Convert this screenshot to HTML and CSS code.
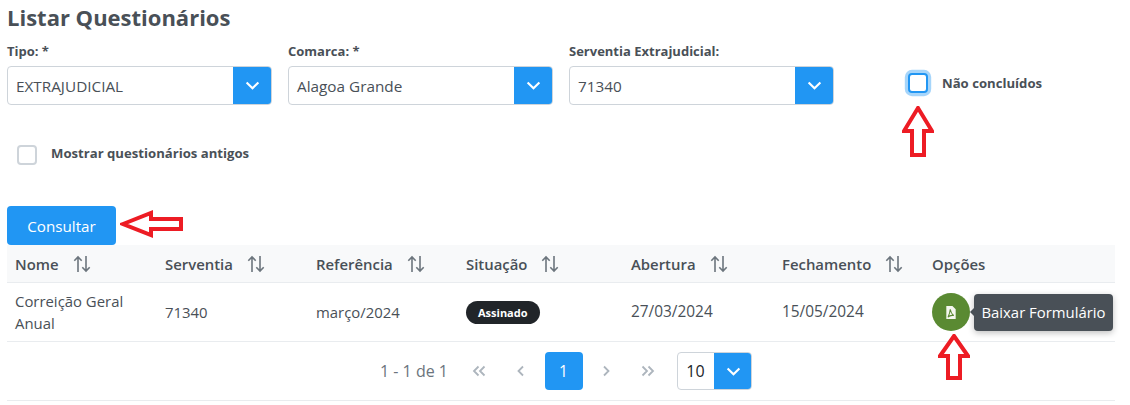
FILE: index.html
```html
<!DOCTYPE html>
<html lang="pt-BR">
<head>
<meta charset="utf-8">
<title>Listar Questionários</title>
<link rel="stylesheet" href="styles.css">
</head>
<body>
<main class="page">
  <h1 class="title">Listar Questionários</h1>
  <div class="filters">
    <div class="field">
      <label class="field-label">Tipo: *</label>
      <div class="select"><span class="select-value">EXTRAJUDICIAL</span><span class="select-btn"><svg class="chev" viewBox="0 0 14 8"><path d="M1.5 1.2 7 6.5l5.5-5.3"/></svg></span></div>
    </div>
    <div class="field">
      <label class="field-label">Comarca: *</label>
      <div class="select"><span class="select-value">Alagoa Grande</span><span class="select-btn"><svg class="chev" viewBox="0 0 14 8"><path d="M1.5 1.2 7 6.5l5.5-5.3"/></svg></span></div>
    </div>
    <div class="field">
      <label class="field-label">Serventia Extrajudicial:</label>
      <div class="select"><span class="select-value">71340</span><span class="select-btn"><svg class="chev" viewBox="0 0 14 8"><path d="M1.5 1.2 7 6.5l5.5-5.3"/></svg></span></div>
    </div>
    <div class="check check-focus">
      <span class="box box-focus"></span>
      <span class="check-label">Não concluídos</span>
    </div>
  </div>
  <div class="check check-old">
    <span class="box"></span>
    <span class="check-label">Mostrar questionários antigos</span>
  </div>
  <button class="primary" type="button">Consultar</button>

  <section class="table">
    <div class="row head">
      <div class="cell">Nome<svg class="sort" viewBox="0 0 18 18"><path d="M5 17V2M1.3 5.700 5 2l3.700 3.700M13 1v15M9.300 12.300 13 16l3.700-3.700"/></svg></div>
      <div class="cell">Serventia<svg class="sort" viewBox="0 0 18 18"><path d="M5 17V2M1.3 5.700 5 2l3.700 3.700M13 1v15M9.300 12.300 13 16l3.700-3.700"/></svg></div>
      <div class="cell">Referência<svg class="sort" viewBox="0 0 18 18"><path d="M5 17V2M1.3 5.700 5 2l3.700 3.700M13 1v15M9.300 12.300 13 16l3.700-3.700"/></svg></div>
      <div class="cell">Situação<svg class="sort" viewBox="0 0 18 18"><path d="M5 17V2M1.3 5.700 5 2l3.700 3.700M13 1v15M9.300 12.300 13 16l3.700-3.700"/></svg></div>
      <div class="cell">Abertura<svg class="sort" viewBox="0 0 18 18"><path d="M5 17V2M1.3 5.700 5 2l3.700 3.700M13 1v15M9.300 12.300 13 16l3.700-3.700"/></svg></div>
      <div class="cell">Fechamento<svg class="sort" viewBox="0 0 18 18"><path d="M5 17V2M1.3 5.700 5 2l3.700 3.700M13 1v15M9.300 12.300 13 16l3.700-3.700"/></svg></div>
      <div class="cell">Opções</div>
    </div>
    <div class="row body">
      <div class="cell">Correição Geral Anual</div>
      <div class="cell">71340</div>
      <div class="cell">março/2024</div>
      <div class="cell"><span class="badge">Assinado</span></div>
      <div class="cell date">27/03/2024</div>
      <div class="cell date">15/05/2024</div>
      <div class="cell options">
        <span class="round">
          <svg class="pdf" viewBox="0 0 12 16"><path class="pdf-page" d="M1 1h6.500L11 4.500V15H1z"/><path class="pdf-mark" d="M5.200 4.500c.5 3 1.300 5 3.800 6.800-2.600-.6-4.600-.1-6.200 1.700 1.200-2.500 2.100-5 2.400-8.500z"/></svg>
        </span>
        <span class="tooltip">Baixar Formulário</span>
      </div>
    </div>
    <div class="pager">
      <span class="pager-info">1 - 1 de 1</span>
      <span class="pg"><svg class="pg-icon" viewBox="0 0 16 12"><path d="M7.500 1.500 3 6l4.500 4.500M13.500 1.500 9 6l4.500 4.500"/></svg></span>
      <span class="pg"><svg class="pg-icon" viewBox="0 0 16 12"><path d="M10 1.500 5.500 6l4.500 4.500"/></svg></span>
      <span class="pg pg-active">1</span>
      <span class="pg"><svg class="pg-icon" viewBox="0 0 16 12"><path d="M6 1.500 10.500 6 6 10.500"/></svg></span>
      <span class="pg"><svg class="pg-icon" viewBox="0 0 16 12"><path d="M2.500 1.500 7 6l-4.500 4.500M8.500 1.500 13 6l-4.500 4.500"/></svg></span>
      <div class="select select-small"><span class="select-value">10</span><span class="select-btn"><svg class="chev" viewBox="0 0 14 8"><path d="M1.5 1.2 7 6.500l5.500-5.300"/></svg></span></div>
    </div>
  </section>

  <svg class="arrow arrow-up-1" viewBox="0 0 32 52"><path d="M16 2 30 25H22V49H10V25H2z"/></svg>
  <svg class="arrow arrow-up-2" viewBox="0 0 32 46"><path d="M16 2 30 22H22V44H10V22H2z"/></svg>
  <svg class="arrow arrow-left" viewBox="0 0 64 28"><path d="M3 14 31 3V9H61V19H31V25z"/></svg>
</main>
</body>
</html>
```

FILE: styles.css
```css
* { box-sizing: border-box; }
html, body { margin: 0; padding: 0; background: #fff; }
body {
  width: 1130px;
  height: 405px;
  overflow: hidden;
  font-family: "Open Sans", "Noto Sans", sans-serif;
  font-size: 14.900px;
  color: #495057;
}
.page { position: relative; padding: 2px 15px 0 7px; }
.title {
  margin: 0;
  font-size: 22px;
  line-height: 30px;
  font-weight: 700;
  color: #495057;
}
.filters { display: flex; gap: 16px; margin-top: 11px; }
.field { width: 265px; }
.field-label {
  display: block;
  font-size: 13px;
  line-height: 17px;
  font-weight: 700;
  margin-bottom: 6px;
}
.select {
  display: flex;
  height: 39px;
  border: 1px solid #ced4da;
  border-radius: 4px;
  background: #fff;
  overflow: hidden;
}
.select-value {
  flex: 1;
  padding-left: 8px;
  font-size: 15.300px;
  line-height: 38px;
  color: #495057;
}
.select-btn {
  width: 39px;
  margin: -1px -1px -1px 0;
  background: #2196f3;
  display: flex;
  align-items: center;
  justify-content: center;
}
.chev { width: 15px; height: 9px; fill: none; stroke: #fff; stroke-width: 2; }
.check { display: flex; align-items: flex-start; }
.box {
  width: 20px;
  height: 20px;
  border: 2px solid #ced4da;
  border-radius: 4px;
  background: #fff;
  flex: none;
}
.box-focus { border-color: #2196f3; box-shadow: 0 0 0 3.200px #a6d5fa; }
.check-label { font-size: 13.150px; font-weight: 700; line-height: 17px; margin-left: 14px; }
.check-focus { margin: 30px 0 0 58px; }
.check-focus .check-label { margin-top: 2px; }
.check-old { margin: 40px 0 0 10px; }
.primary {
  display: block;
  margin-top: 41px;
  width: 109px;
  height: 39px;
  border: 0;
  border-radius: 4px;
  background: #2196f3;
  color: #fff;
  font: inherit;
  font-size: 15.200px;
}
.table { width: 1108px; }
.row {
  display: grid;
  grid-template-columns: 150px 151px 150px 165px 151px 150px 191px;
  border-bottom: 1px solid #e9ecef;
}
.cell { padding: 0 8px; }
.head { height: 38px; background: #f8f9fa; align-items: center; font-weight: 600; }
.head .cell { display: flex; align-items: center; white-space: nowrap; }
.sort { width: 18px; height: 18px; margin-left: 14px; fill: none; stroke: #6c757d; stroke-width: 1.600; }
.body { height: 59px; align-items: center; }
.body .cell { line-height: 22px; }
.body .date { font-size: 15.400px; }
.badge {
  display: inline-block;
  background: #212529;
  color: #fff;
  font-size: 11px;
  font-weight: 700;
  line-height: 23px;
  height: 23px;
  padding: 0 12px;
  border-radius: 12px;
  vertical-align: middle;
}
.options { position: relative; display: flex; align-items: center; }
.round {
  width: 38px;
  height: 38px;
  border-radius: 50%;
  background: #5a8a32;
  display: flex;
  align-items: center;
  justify-content: center;
}
.pdf { width: 12px; height: 15px; }
.pdf-page { fill: #f4f7ef; }
.pdf-mark { fill: none; stroke: #5a8a32; stroke-width: 1.100; }
.tooltip {
  position: absolute;
  left: 50px;
  top: 1px;
  height: 37px;
  width: 139px;
  background: #495057;
  color: #fff;
  border-radius: 4px;
  text-align: center;
  line-height: 37px;
  white-space: nowrap;
  box-shadow: 0 2px 6px rgba(0,0,0,.25);
}
.tooltip::before {
  content: "";
  position: absolute;
  left: -4px;
  top: 14px;
  border-style: solid;
  border-width: 4px 4px 4px 0;
  border-color: transparent #495057 transparent transparent;
}
.pager {
  display: flex;
  align-items: center;
  height: 59px;
  padding-left: 373px;
  border-bottom: 1px solid #e9ecef;
}
.pager-info { width: 80px; font-size: 16px; color: #6c757d; white-space: nowrap; }
.pg {
  width: 38px;
  height: 38px;
  margin-right: 4.250px;
  border-radius: 4px;
  display: flex;
  align-items: center;
  justify-content: center;
  color: #6c757d;
}
.pg-active { background: #2196f3; color: #fff; font-size: 15.500px; }
.pg-icon { width: 16px; height: 12px; fill: none; stroke: #adb5bd; stroke-width: 1.800; }
.select-small { width: 75px; height: 38px; margin-left: 6px; }
.select-small .select-btn { width: 38px; }
.select-small .select-value { font-size: 16px; line-height: 37px; color: #212529; }
.arrow {
  position: absolute;
  fill: #fff;
  stroke: #ed1c24;
  stroke-width: 4;
}
.arrow-up-1 { left: 902px; top: 106px; width: 32px; height: 52px; }
.arrow-up-2 { left: 938px; top: 334px; width: 32px; height: 46px; }
.arrow-left { left: 120px; top: 210px; width: 64px; height: 28px; }
```
